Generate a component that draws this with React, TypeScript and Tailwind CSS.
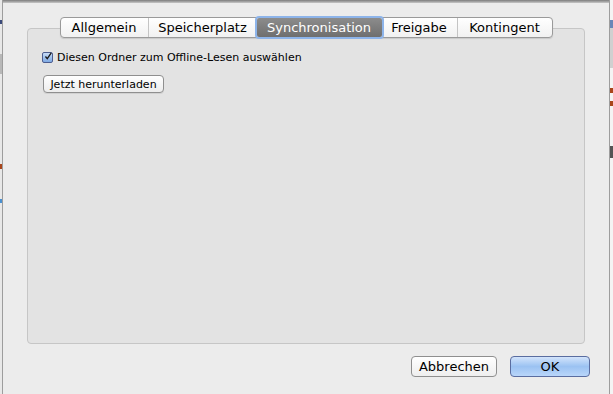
import React, { useState } from 'react';

const tabs = ['Allgemein', 'Speicherplatz', 'Synchronisation', 'Freigabe', 'Kontingent'];
const tabWidths: Record<string, string> = {
  Allgemein: 'w-[88px]',
  Speicherplatz: 'w-[108px]',
  Synchronisation: 'w-[125px]',
  Freigabe: 'w-[76px]',
  Kontingent: 'w-[94px]',
};

const App: React.FC = () => {
  const [active, setActive] = useState('Synchronisation');
  const [offline, setOffline] = useState(true);

  return (
    <div className="w-[613px] h-[394px] flex bg-[#c9c9c9] overflow-hidden font-['Lucida_Grande','DejaVu_Sans',sans-serif] text-black">
      {/* window behind, left edge */}
      <div className="w-[2px] flex flex-col bg-[#e8e8e8]">
        <div className="h-[20px]" />
        <div className="h-[4px] bg-[#3b4a7a]" />
        <div className="h-[30px]" />
        <div className="h-[20px] bg-[#b8b8b8]" />
        <div className="h-[90px]" />
        <div className="h-[5px] bg-[#a8461c]" />
        <div className="h-[30px]" />
        <div className="h-[4px] bg-[#4a90d0]" />
        <div className="flex-1" />
      </div>

      <div className="flex-1 flex flex-col bg-[#ececec] border-l border-r border-[#9d9d9d]">
        <div className="h-[3px] bg-gradient-to-b from-[#7c7c7c] to-[#c8c8c8]" />

        <div className="flex-1 flex flex-col px-[24px] pt-[14px]">
          {/* tabs */}
          <div className="relative z-10 flex justify-center">
            <div className="flex h-[21px] rounded-[4px] border border-[#9a9a9a] bg-gradient-to-b from-white to-[#f1f1f1] shadow-[0_1px_1px_rgba(0,0,0,0.12)]">
              {tabs.map((t, i) => {
                const sel = t === active;
                const nextSel = tabs[i + 1] === active;
                return (
                  <button
                    key={t}
                    onClick={() => setActive(t)}
                    className={`${tabWidths[t]} h-full flex items-center justify-center text-[13px] leading-none ${
                      sel
                        ? 'bg-gradient-to-b from-[#8c8c8c] to-[#6f6f6f] text-white shadow-[0_0_0_2px_#8db4ea] rounded-[2px] relative z-10'
                        : i < tabs.length - 1 && !nextSel
                        ? 'border-r border-[#c4c4c4]'
                        : ''
                    }`}
                  >
                    {t}
                  </button>
                );
              })}
            </div>
          </div>

          {/* panel */}
          <div className="-mt-[10px] h-[316px] rounded-[4px] border border-[#c6c6c6] bg-[#e3e3e3] px-[14px] pt-[23px]">
            <label className="flex items-center gap-[4px] text-[11px] leading-none cursor-default">
              <span
                onClick={() => setOffline(!offline)}
                className="w-[11px] h-[11px] rounded-[2px] border border-[#4c5d8f] bg-gradient-to-b from-[#c8dcf6] to-[#7ea9e3] flex items-center justify-center"
              >
                {offline && (
                  <svg width="11" height="11" viewBox="0 0 11 11" className="-mt-[2px] ml-[1px]">
                    <path d="M2 5.5 L4.5 8.5 L10 0.5" fill="none" stroke="#1a1a1a" strokeWidth="1.8" />
                  </svg>
                )}
              </span>
              <span>Diesen Ordner zum Offline-Lesen auswählen</span>
            </label>

            <button className="mt-[12px] ml-[1px] w-[121px] h-[18px] rounded-[4px] border border-[#8f8f8f] bg-gradient-to-b from-white to-[#ececec] text-[11px] leading-none shadow-[0_1px_0_rgba(0,0,0,0.08)]">
              Jetzt herunterladen
            </button>
          </div>

          {/* footer buttons */}
          <div className="flex justify-end gap-[13px] mt-[12px] -mr-[5px]">
            <button className="w-[86px] h-[21px] rounded-[4px] border border-[#8f8f8f] bg-gradient-to-b from-white to-[#eeeeee] text-[13px] leading-none">
              Abbrechen
            </button>
            <button className="w-[80px] h-[21px] rounded-[4px] border border-[#5a6da0] bg-gradient-to-b from-[#d3e4fb] via-[#9bc2f2] to-[#b9d6fa] text-[13px] leading-none">
              OK
            </button>
          </div>
        </div>
      </div>

      {/* window behind, right edge */}
      <div className="w-[3px] flex flex-col bg-[#f4f4f4]">
        <div className="h-[20px]" />
        <div className="h-[8px] bg-[#6a86b8]" />
        <div className="h-[40px] bg-[#d0d0d0]" />
        <div className="h-[20px]" />
        <div className="h-[5px] bg-[#a8461c]" />
        <div className="h-[8px]" />
        <div className="h-[5px] bg-[#a8461c]" />
        <div className="h-[40px]" />
        <div className="h-[12px] bg-[#555]" />
        <div className="flex-1" />
      </div>
    </div>
  );
};

export default App;
